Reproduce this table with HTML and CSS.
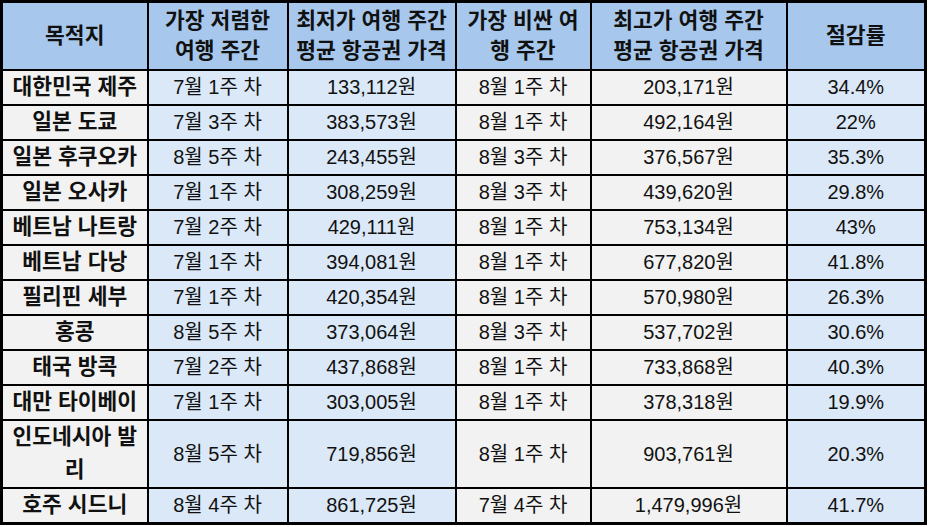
FILE: index.html
```html
<!DOCTYPE html>
<html lang="ko">
<head>
<meta charset="utf-8">
<title>여행 주간별 항공권 가격</title>
<link rel="stylesheet" href="styles.css">
</head>
<body>
<table class="fares">
  <colgroup>
    <col class="c1"><col class="c2"><col class="c3"><col class="c4"><col class="c5"><col class="c6">
  </colgroup>
  <thead>
    <tr class="head">
      <th>목적지</th>
      <th>가장 저렴한<br>여행 주간</th>
      <th>최저가 여행 주간<br>평균 항공권 가격</th>
      <th>가장 비싼 여<br>행 주간</th>
      <th>최고가 여행 주간<br>평균 항공권 가격</th>
      <th>절감률</th>
    </tr>
  </thead>
  <tbody>
    <tr><td class="dest">대한민국 제주</td><td class="blue">7월 1주 차</td><td class="blue">133,112원</td><td>8월 1주 차</td><td>203,171원</td><td class="blue">34.4%</td></tr>
    <tr><td class="dest">일본 도쿄</td><td class="blue">7월 3주 차</td><td class="blue">383,573원</td><td>8월 1주 차</td><td>492,164원</td><td class="blue">22%</td></tr>
    <tr><td class="dest">일본 후쿠오카</td><td class="blue">8월 5주 차</td><td class="blue">243,455원</td><td>8월 3주 차</td><td>376,567원</td><td class="blue">35.3%</td></tr>
    <tr><td class="dest">일본 오사카</td><td class="blue">7월 1주 차</td><td class="blue">308,259원</td><td>8월 3주 차</td><td>439,620원</td><td class="blue">29.8%</td></tr>
    <tr><td class="dest">베트남 나트랑</td><td class="blue">7월 2주 차</td><td class="blue">429,111원</td><td>8월 1주 차</td><td>753,134원</td><td class="blue">43%</td></tr>
    <tr><td class="dest">베트남 다낭</td><td class="blue">7월 1주 차</td><td class="blue">394,081원</td><td>8월 1주 차</td><td>677,820원</td><td class="blue">41.8%</td></tr>
    <tr><td class="dest">필리핀 세부</td><td class="blue">7월 1주 차</td><td class="blue">420,354원</td><td>8월 1주 차</td><td>570,980원</td><td class="blue">26.3%</td></tr>
    <tr><td class="dest">홍콩</td><td class="blue">8월 5주 차</td><td class="blue">373,064원</td><td>8월 3주 차</td><td>537,702원</td><td class="blue">30.6%</td></tr>
    <tr><td class="dest">태국 방콕</td><td class="blue">7월 2주 차</td><td class="blue">437,868원</td><td>8월 1주 차</td><td>733,868원</td><td class="blue">40.3%</td></tr>
    <tr><td class="dest">대만 타이베이</td><td class="blue">7월 1주 차</td><td class="blue">303,005원</td><td>8월 1주 차</td><td>378,318원</td><td class="blue">19.9%</td></tr>
    <tr class="tall"><td class="dest">인도네시아 발<br>리</td><td class="blue">8월 5주 차</td><td class="blue">719,856원</td><td>8월 1주 차</td><td>903,761원</td><td class="blue">20.3%</td></tr>
    <tr><td class="dest">호주 시드니</td><td class="blue">8월 4주 차</td><td class="blue">861,725원</td><td>7월 4주 차</td><td>1,479,996원</td><td class="blue">41.7%</td></tr>
  </tbody>
</table>
</body>
</html>
```

FILE: styles.css
```css
html, body {
  margin: 0;
  padding: 0;
  background: #ffffff;
}

.fares {
  border-collapse: collapse;
  table-layout: fixed;
  width: 927px;
  border: 3px solid #000;
  font-family: "Liberation Sans", "Noto Sans CJK KR", sans-serif;
  font-size: 20px;
  color: #111;
}

.c1 { width: 146px; }
.c2 { width: 140px; }
.c3 { width: 168px; }
.c4 { width: 135px; }
.c5 { width: 196px; }
.c6 { width: 139px; }

.fares th,
.fares td {
  border: 2px solid #000;
  padding: 0;
  text-align: center;
  vertical-align: middle;
  line-height: 33px;
  white-space: nowrap;
  background: #f2f2f2;
}

.head th {
  background: #a7c8ec;
  font-weight: bold;
  font-size: 21.5px;
  line-height: 30px;
  height: 66px;
  padding: 0;
}

.fares td {
  height: 33px;
}

.fares td.dest {
  font-weight: bold;
  font-size: 21.5px;
}

.fares td.blue {
  background: #dbe8f7;
}

.tall td {
  height: 65px;
}
```
